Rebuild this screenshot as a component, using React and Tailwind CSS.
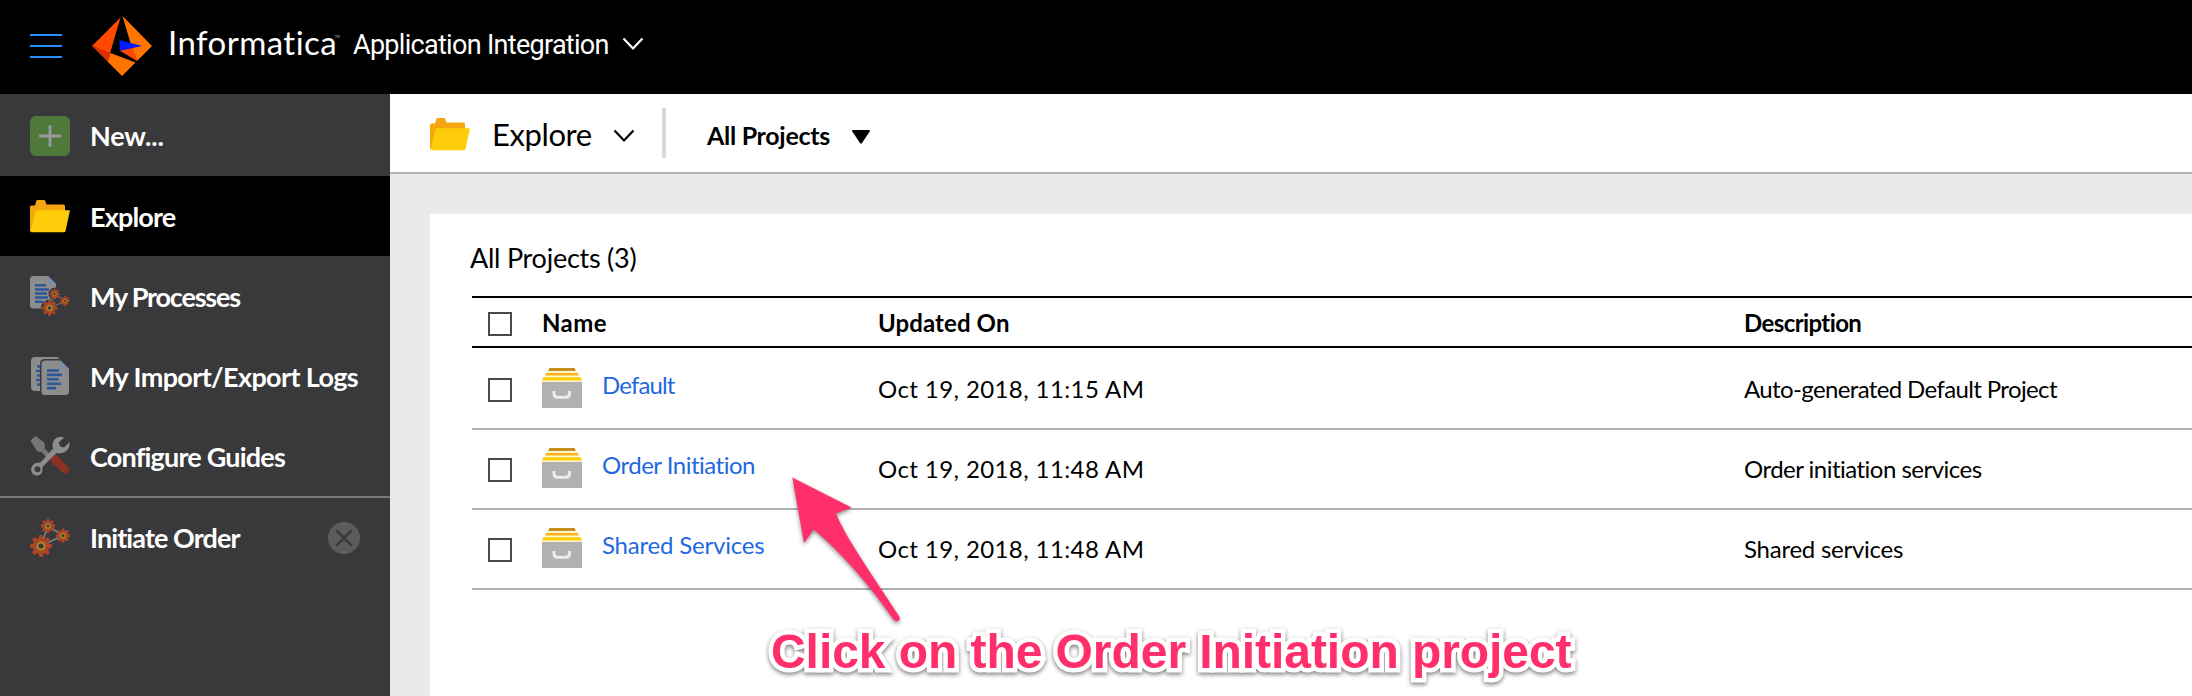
function gearPath(cx, cy, r, teeth = 8) {
  const inner = r * 0.74;
  const step = (Math.PI * 2) / teeth;
  const pts = [];
  for (let i = 0; i < teeth; i++) {
    const a = i * step - Math.PI / 2;
    [[-0.34, inner], [-0.2, r], [0.2, r], [0.34, inner]].forEach(([o, rad]) => {
      pts.push(`${(cx + rad * Math.cos(a + o * step)).toFixed(2)},${(cy + rad * Math.sin(a + o * step)).toFixed(2)}`);
    });
  }
  return `M${pts.join('L')}Z`;
}

function Gear({ cx, cy, r }) {
  return (
    <g>
      <path d={gearPath(cx, cy, r)} fill="#a94529" />
      <circle cx={cx} cy={cy} r={r * 0.31} fill="#39393b" stroke="#ad8a22" strokeWidth={r * 0.17} />
    </g>
  );
}

function Logo() {
  return (
    <svg width="60" height="60" viewBox="0 0 60 60" className="shrink-0">
      <path d="M28.5 1.5L0 30L18 37.5Z" fill="#ff4800" />
      <path d="M0 30L18.5 37L16.5 46.5Z" fill="#dc2f04" />
      <path d="M30.5 0L60 30L45 45L38.5 27Z" fill="#ff7500" />
      <path d="M27.5 34.5L41 31.500L45 45Z" fill="#ff4800" />
      <path d="M27.5 24L50 30L27.5 34.8Z" fill="#0019ff" />
      <path d="M18.5 37L43.5 46.5L30 60L16 46Z" fill="#ff7500" />
    </svg>
  );
}

function FolderIcon() {
  return (
    <svg width="40" height="33" viewBox="0 0 40 33" className="shrink-0">
      <path d="M0 31V7Q0 5.500 1.500 5.500H5L6.200 1.200Q6.500 0 7.500 0H14Q15 0 15.300 1L16.300 4.500H33.500Q35 4.500 35 6V20L20 31Z" fill="#f4a60f" />
      <path d="M5.500 11.500Q5.800 10.300 7 10.300H40L35.500 31Q35.200 32.300 34 32.300H1.500Q0.300 32.300 0.600 31Z" fill="#ffcc0a" />
    </svg>
  );
}

function PlusIcon() {
  return (
    <svg width="40" height="40" viewBox="0 0 40 40" className="shrink-0">
      <rect width="40" height="40" rx="6" fill="#4f793b" />
      <path d="M20 10.300V29.700M10.300 20H29.700" stroke="#9b9b9b" strokeWidth="2.800" strokeLinecap="round" />
    </svg>
  );
}

function ProcessIcon() {
  return (
    <svg width="40" height="40" viewBox="0 0 40 40" className="shrink-0">
      <path d="M3.500 0H18L26 8V29Q26 32.500 22.500 32.500H3.500Q0 32.500 0 29V3.500Q0 0 3.500 0Z" fill="#8d8d8d" />
      <path d="M18 0L26 8H20Q18 8 18 6Z" fill="#7690b0" />
      <path d="M5 9.300H16M5 13.400H19M5 17.500H17M5 21.600H18M5 25.700H13" stroke="#2d5799" strokeWidth="2.500" />
      <circle cx="25" cy="18" r="6.500" fill="#39393b" />
      <circle cx="19.500" cy="32" r="8.600" fill="#39393b" />
      <path d="M25 18L35 25L20 32Z" fill="#39393b" stroke="#777" strokeWidth="1" />
      <Gear cx={24.700} cy={18} r={5.200} />
      <Gear cx={35} cy={25} r={5} />
      <Gear cx={19.500} cy={32} r={8} />
    </svg>
  );
}

function LogsIcon() {
  return (
    <svg width="40" height="40" viewBox="0 0 40 40" className="shrink-0">
      <rect x="1" y="1" width="29" height="34" rx="4" fill="#8d8d8d" />
      <path d="M7 10.500H14M6 15H14M7 19.500H14M6 24H14M7 28.500H14" stroke="#2d5799" strokeWidth="2.500" />
      <path d="M15 3H32L41 12V35Q41 39 37 39H14Q10 39 10 35V8Q10 3 15 3Z" fill="#39393b" />
      <path d="M15 4.500H30.500L39 13V35.500Q39 39 35.500 39H15Q11.500 39 11.500 35.500V8Q11.500 4.500 15 4.500Z" fill="#8d8d8d" />
      <path d="M30.500 4.500L39 13H32.500Q30.500 13 30.500 11Z" fill="#7690b0" />
      <path d="M17 14.500H29M17 18.900H32M17 23.300H28.500M17 27.700H31M17 32.100H26" stroke="#2d5799" strokeWidth="2.600" />
    </svg>
  );
}

function ToolsIcon() {
  return (
    <svg width="40" height="40" viewBox="0 0 40 40" className="shrink-0">
      <path d="M5.500 0L13 5.500Q16 9 14.500 12.500L22 20L18.500 23.500L11.500 15.800Q9 16.500 6.500 14.500L0.500 4.500Z" fill="#767676" />
      <path d="M25.500 23.500L35 33.500" stroke="#8b3222" strokeWidth="8" strokeLinecap="round" />
      <path d="M20 21L26 18.500L30 24L23 30Z" fill="#8b3222" />
      <path d="M34 1.500Q28 -0.500 24.500 3.500Q21.500 7.500 23 12.500L10.500 26.500Q5 26 2.300 29.800Q-0.300 34.500 2.800 38Q7 41.300 11 38Q13 35.500 12.300 31L26.500 17Q32 18.500 36.300 15Q40.500 11 39.500 6L34 11.500L30 10.500L28.800 6.500Z" fill="#8d8d8d" />
      <circle cx="7.500" cy="33.300" r="3" fill="#39393b" />
    </svg>
  );
}

function GearsIcon() {
  return (
    <svg width="40" height="40" viewBox="0 0 40 40" className="shrink-0">
      <path d="M18 8L33 17.500L11 28Z" fill="none" stroke="#858585" strokeWidth="1.500" />
      <Gear cx={18} cy={8} r={7.200} />
      <Gear cx={33} cy={17.700} r={7.200} />
      <Gear cx={11} cy={28} r={11.200} />
    </svg>
  );
}

function CloseIcon() {
  return (
    <svg width="32" height="32" viewBox="0 0 32 32" className="shrink-0">
      <circle cx="16" cy="16" r="16" fill="#5c5c5c" />
      <path d="M9 9L23 23M23 9L9 23" stroke="#3b3b3d" strokeWidth="2.600" strokeLinecap="round" />
    </svg>
  );
}

function DrawerIcon() {
  return (
    <svg width="40" height="40" viewBox="0 0 40 40" className="shrink-0">
      <path d="M7.500 0H32.500L34 3H6Z" fill="#c8901a" />
      <path d="M5.500 3.500H34.500L36.500 7.300H3.500Z" fill="#fff0c8" />
      <path d="M4.300 5H35.700L37 7.500H3Z" fill="#ffb414" />
      <path d="M2 8.500H38L40 14H0Z" fill="#fff0b8" />
      <path d="M1.500 9.300H38.500L40 12.200H0Z" fill="#ffcc0a" />
      <path d="M0 14H40V40H0Z" fill="#b1b1b1" />
      <path d="M12 23V25.500Q12 29.300 15.500 29.300H24Q27.500 29.300 27.500 25.500V23" fill="none" stroke="#e9eeed" strokeWidth="3" />
    </svg>
  );
}

function Chevron({ className }) {
  return (
    <svg width="22" height="14" viewBox="0 0 22 14" className={className} fill="none" stroke="currentColor" strokeWidth="2.200">
      <path d="M1.500 1.500L11 11.500L20.500 1.500" />
    </svg>
  );
}

function Checkbox({ className }) {
  return <span className={`block size-6 shrink-0 border-2 border-[#4b4b4b] bg-white ${className}`} />;
}

const navItems = [
  { label: 'New...', icon: <PlusIcon />, style: 'h-[82px] pt-px', text: 'tracking-[-0.2px]' },
  { label: 'Explore', icon: <FolderIcon />, style: 'h-20 bg-black', text: 'tracking-[-0.85px]' },
  { label: 'My Processes', icon: <ProcessIcon />, style: 'h-20', text: 'tracking-[-1.2px]' },
  { label: 'My Import/Export Logs', icon: <LogsIcon />, style: 'h-20', text: 'tracking-[-0.63px]' },
  { label: 'Configure Guides', icon: <ToolsIcon />, style: 'h-20', text: 'tracking-[-0.8px]' },
];

const projects = [
  {
    name: 'Default',
    nameStyle: 'tracking-[-0.85px]',
    updated: 'Oct 19, 2018, 11:15 AM',
    description: 'Auto-generated Default Project',
    descriptionStyle: 'tracking-[-0.63px]',
  },
  {
    name: 'Order Initiation',
    nameStyle: 'tracking-[-0.5px]',
    updated: 'Oct 19, 2018, 11:48 AM',
    description: 'Order initiation services',
    descriptionStyle: 'tracking-[-0.52px]',
  },
  {
    name: 'Shared Services',
    nameStyle: 'tracking-[-0.2px]',
    updated: 'Oct 19, 2018, 11:48 AM',
    description: 'Shared services',
    descriptionStyle: 'tracking-[-0.25px]',
  },
];

function Header() {
  return (
    <header className="flex h-[94px] shrink-0 items-center bg-black pl-[30px] text-white">
      <div className="mt-[-2px] flex w-8 flex-col gap-[9px]">
        <span className="h-0.5 bg-[#2a8cff]" />
        <span className="h-0.5 bg-[#2a8cff]" />
        <span className="h-0.5 bg-[#2a8cff]" />
      </div>
      <div className="mb-[2px] ml-[30px] flex">
        <Logo />
      </div>
      <div className="ml-4 flex pb-[10px]">
        <span className="w-[167px] text-[33px] leading-10 tracking-[0.45px]">Informatica</span>
        <span className="mt-[9px] w-[18px] text-[3px] leading-3 text-gray-300">TM</span>
      </div>
      <span className="pb-[4px] font-[Roboto] text-[27px] leading-8 tracking-[-0.7px]">Application Integration</span>
      <Chevron className="mb-[7px] ml-[13px]" />
    </header>
  );
}

function Sidebar() {
  return (
    <nav className="flex w-[390px] shrink-0 flex-col bg-[#39393b] text-[27px] font-bold leading-8 text-white">
      {navItems.map((item) => (
        <div key={item.label} className={`flex shrink-0 items-center gap-5 pl-[30px] ${item.style}`}>
          {item.icon}
          <span className={`pt-px ${item.text}`}>{item.label}</span>
        </div>
      ))}
      <div className="flex h-[82px] items-center border-t-2 border-[#7b7b7b] px-[30px]">
        <GearsIcon />
        <span className="ml-5 flex-1 tracking-[-0.9px]">Initiate Order</span>
        <CloseIcon />
      </div>
    </nav>
  );
}

function Toolbar() {
  return (
    <div className="flex h-20 shrink-0 items-center border-b-2 border-[#b1b1b1] bg-white pl-10">
      <div className="mt-[3px] flex">
        <FolderIcon />
      </div>
      <span className="ml-[22px] w-[100px] pt-[2px] text-[31px] leading-10 tracking-[-0.4px]">Explore</span>
      <Chevron className="ml-[21px] mt-[5px]" />
      <span className="ml-[27px] h-[50px] w-1 bg-[#d8d8d8]" />
      <span className="ml-[41px] w-[124px] pt-[3px] text-[25px] font-bold leading-8 tracking-[-0.3px]">All Projects</span>
      <svg width="18" height="14" viewBox="0 0 18 14" className="ml-[21px] mt-[7px]">
        <path d="M1 0H17Q18.500 0.200 17.700 1.500L10 13Q9 14.300 8 13L0.300 1.500Q-0.500 0.200 1 0Z" fill="#000" />
      </svg>
    </div>
  );
}

const columns = 'grid grid-cols-[54px_336px_866px_1fr] items-center pl-4';

function ProjectTable() {
  return (
    <div className="ml-[42px] text-[24px] leading-8">
      <div className={`${columns} h-[52px] border-y-2 border-black font-bold`}>
        <Checkbox className="mt-[3px]" />
        <span className="pt-px tracking-[0.4px]">Name</span>
        <span className="pt-px tracking-[0.1px]">Updated On</span>
        <span className="pt-px tracking-[-0.6px]">Description</span>
      </div>
      <div className="pt-0.5">
        {projects.map((p) => (
          <div key={p.name} className={`${columns} h-20 border-b-2 border-[#b1b1b1]`}>
            <Checkbox className="mt-[2px]" />
            <div className="flex items-center">
              <div className="mb-[2px] flex">
                <DrawerIcon />
              </div>
              <a className={`mb-[8px] ml-5 text-[#1f68e0] ${p.nameStyle}`}>{p.name}</a>
            </div>
            <span className="tracking-[0.4px]">{p.updated}</span>
            <span className={p.descriptionStyle}>{p.description}</span>
          </div>
        ))}
      </div>
    </div>
  );
}

function Callout() {
  return (
    <>
      <svg
        width="130"
        height="160"
        viewBox="785 470 130 160"
        className="absolute left-[785px] top-[470px] drop-shadow-[0_2px_2px_rgba(0,0,0,0.45)]"
      >
        <path
          d="M792.300 477.500L851.500 507.500L836 513.500C846 538 869 570 899.500 617C901 621 896 623 893.500 619.500C870 586 842 553 813.800 529.500L804 543Z"
          fill="#ff2f6c"
        />
      </svg>
      <div className="absolute left-[771px] top-[622px] whitespace-nowrap font-['Liberation_Sans'] text-[48px] font-bold leading-[60px] tracking-[-0.06px] text-[#ff2f6c] drop-shadow-[0_2px_2px_rgba(0,0,0,0.5)] [-webkit-text-stroke:9px_white] [paint-order:stroke_fill] [stroke-linejoin:round]">
        Click on the Order Initiation project
      </div>
    </>
  );
}

export default function App() {
  return (
    <div className="relative flex h-[696px] w-[2192px] flex-col overflow-hidden whitespace-nowrap bg-[#eaeaea] font-[Lato,sans-serif] text-black [font-variant-ligatures:none]">
      <Header />
      <div className="flex flex-1">
        <Sidebar />
        <main className="flex min-w-0 flex-1 flex-col">
          <Toolbar />
          <section className="ml-10 mt-10 flex-1 bg-white">
            <h1 className="flex h-[82px] items-center pl-10 pt-[7px] text-[27px] tracking-[-0.25px]">All Projects (3)</h1>
            <ProjectTable />
          </section>
        </main>
      </div>
      <Callout />
    </div>
  );
}
